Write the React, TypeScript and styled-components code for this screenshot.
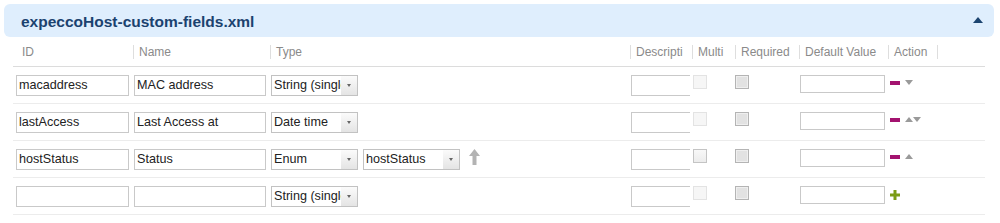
import styled, { createGlobalStyle } from "styled-components";

const GlobalStyle = createGlobalStyle`
  body {
    margin: 0;
    background: #fff;
    font-family: "Liberation Sans", Arial, sans-serif;
  }
`;

const Page = styled.div`
  padding: 4px 6px 0 4px;
`;

const TitleBar = styled.div`
  height: 33px;
  border-radius: 6px;
  background: #dfeefd;
  display: flex;
  align-items: center;
  justify-content: space-between;
  padding: 2px 11px 0 17px;
  box-sizing: border-box;
`;

const Title = styled.h2`
  margin: 0;
  font-size: 15.5px;
  font-weight: bold;
  color: #1b426f;
`;

const Collapse = styled.span`
  width: 0;
  height: 0;
  border-left: 5px solid transparent;
  border-right: 5px solid transparent;
  border-bottom: 6px solid #1c4470;
  margin-bottom: 3px;
`;

const Table = styled.div`
  margin: 1px 0 0 9px;
  width: 972px;
`;

const COLS = "120px 137px 360px 62px 43px 64px 89px 49px 48px";

const HeadRow = styled.div`
  display: grid;
  grid-template-columns: ${COLS};
  height: 28px;
  align-items: center;
  border-bottom: 1px solid #dcdcdc;
`;

const HeadLabel = styled.span<{ $first?: boolean }>`
  display: block;
  line-height: 14px;
  font-size: 12px;
  color: #8a8a8a;
  white-space: nowrap;
  overflow: hidden;
  padding-left: ${(p) => (p.$first ? "8px" : "5px")};
  border-left: 1px solid ${(p) => (p.$first ? "transparent" : "#dedede")};
`;

const Row = styled.div`
  display: grid;
  grid-template-columns: ${COLS};
  height: 36px;
  border-bottom: 1px solid #ececec;
`;

const Cell = styled.div<{ $pad?: number }>`
  display: flex;
  align-items: flex-start;
  padding: 8px 0 0 ${(p) => p.$pad ?? 1}px;
  overflow: hidden;
`;

const TextBox = styled.div<{ $w: number; $h?: number }>`
  width: ${(p) => p.$w}px;
  height: ${(p) => p.$h ?? 21}px;
  box-sizing: border-box;
  border: 1px solid #c9c9c9;
  background: #fff;
  font-size: 12.6px;
  color: #222;
  line-height: ${(p) => (p.$h ?? 21) - 2}px;
  padding-left: 2px;
  white-space: nowrap;
  overflow: hidden;
`;

const AreaClip = styled.div`
  width: 59px;
  overflow: hidden;
`;

const Area = styled.div`
  width: 90px;
  height: 21px;
  box-sizing: border-box;
  border: 1px solid #c9c9c9;
  background: #fff;
`;

const Select = styled.div<{ $w: number }>`
  width: ${(p) => p.$w}px;
  height: 21px;
  box-sizing: border-box;
  border: 1px solid #c2c2c2;
  display: flex;
  background: #fff;
  margin-right: 5px;
`;

const SelectText = styled.span`
  flex: 1;
  overflow: hidden;
  white-space: nowrap;
  font-size: 12.6px;
  color: #222;
  line-height: 19px;
  padding-left: 2px;
`;

const SelectButton = styled.span`
  width: 16px;
  display: flex;
  align-items: center;
  justify-content: center;
  background: linear-gradient(#fbfbfb, #e4e4e4);

  &::after {
    content: "";
    border-left: 2.5px solid transparent;
    border-right: 2.5px solid transparent;
    border-top: 3px solid #666;
  }
`;

const Check = styled.span<{ $variant: "disabled" | "enabled" | "required" }>`
  width: 14px;
  height: 14px;
  box-sizing: border-box;
  border: 1px solid
    ${(p) =>
      p.$variant === "disabled" ? "#e3e3e3" : p.$variant === "enabled" ? "#c4c4c4" : "#b4b4b4"};
  background: ${(p) =>
    p.$variant === "disabled"
      ? "#f6f6f6"
      : p.$variant === "enabled"
      ? "linear-gradient(#f8f8f8, #ececec)"
      : "#e2e2e2"};
  box-shadow: ${(p) => (p.$variant === "required" ? "inset 0 0 0 1px #efefef" : "none")};
`;

const Actions = styled.div`
  display: flex;
  align-items: center;
  gap: 5px;
  padding: 5px 0 0 2px;
`;

const Minus = styled.span`
  width: 10px;
  height: 4px;
  background: #a3136f;
`;

const Tri = styled.span<{ $dir: "up" | "down" }>`
  width: 0;
  height: 0;
  border-left: 4.5px solid transparent;
  border-right: 4.5px solid transparent;
  ${(p) =>
    p.$dir === "up" ? "border-bottom: 5px solid #9a9a9a;" : "border-top: 5px solid #9a9a9a;"}
`;

const TriPair = styled.span`
  display: flex;
`;

const RefArrow = styled.svg`
  margin-left: 4px;
`;

type Action = "minus" | "up" | "down" | "plus";

interface FieldRow {
  id: string;
  name: string;
  type: string;
  enumRef?: string;
  multiDisabled: boolean;
  actions: Action[];
}

const rows: FieldRow[] = [
  { id: "macaddress", name: "MAC address", type: "String (single line)", multiDisabled: true, actions: ["minus", "down"] },
  { id: "lastAccess", name: "Last Access at", type: "Date time", multiDisabled: true, actions: ["minus", "up", "down"] },
  { id: "hostStatus", name: "Status", type: "Enum", enumRef: "hostStatus", multiDisabled: false, actions: ["minus", "up"] },
  { id: "", name: "", type: "String (single line)", multiDisabled: true, actions: ["plus"] },
];

const headers = ["ID", "Name", "Type", "Descripti", "Multi", "Required", "Default Value", "Action", ""];

function PlusIcon() {
  return (
    <svg width="10" height="10" viewBox="0 0 10 10" style={{ marginTop: -1 }}>
      <path d="M3.5 0h3v3.5H10v3H6.5V10h-3V6.5H0v-3h3.5z" fill="#7b9c16" />
    </svg>
  );
}

export default function App() {
  return (
    <>
      <GlobalStyle />
      <Page>
        <TitleBar>
          <Title>expeccoHost-custom-fields.xml</Title>
          <Collapse />
        </TitleBar>
        <Table>
          <HeadRow>
            {headers.map((h, i) => (
              <HeadLabel key={i} $first={i === 0}>
                {h || "\u00a0"}
              </HeadLabel>
            ))}
          </HeadRow>
          {rows.map((r, i) => {
            const arrows = r.actions.filter((a) => a === "up" || a === "down");
            return (
              <Row key={i}>
                <Cell $pad={3}>
                  <TextBox $w={113}>{r.id}</TextBox>
                </Cell>
                <Cell>
                  <TextBox $w={132}>{r.name}</TextBox>
                </Cell>
                <Cell>
                  <Select $w={87}>
                    <SelectText>{r.type}</SelectText>
                    <SelectButton />
                  </Select>
                  {r.enumRef && (
                    <>
                      <Select $w={97}>
                        <SelectText>{r.enumRef}</SelectText>
                        <SelectButton />
                      </Select>
                      <RefArrow width="11" height="16" viewBox="0 0 11 16">
                        <path d="M5.5 0L11 7H7.5v9h-4V7H0z" fill="#b3b3b3" />
                      </RefArrow>
                    </>
                  )}
                </Cell>
                <Cell>
                  <AreaClip>
                    <Area />
                  </AreaClip>
                </Cell>
                <Cell>
                  <Check $variant={r.multiDisabled ? "disabled" : "enabled"} />
                </Cell>
                <Cell $pad={0}>
                  <Check $variant="required" />
                </Cell>
                <Cell>
                  <TextBox $w={85} $h={18} />
                </Cell>
                <Cell $pad={0}>
                  <Actions>
                    {r.actions.includes("minus") && <Minus />}
                    {r.actions.includes("plus") && <PlusIcon />}
                    {arrows.length > 0 && (
                      <TriPair>
                        {arrows.map((a) => (
                          <Tri key={a} $dir={a as "up" | "down"} />
                        ))}
                      </TriPair>
                    )}
                  </Actions>
                </Cell>
                <Cell />
              </Row>
            );
          })}
        </Table>
      </Page>
    </>
  );
}
